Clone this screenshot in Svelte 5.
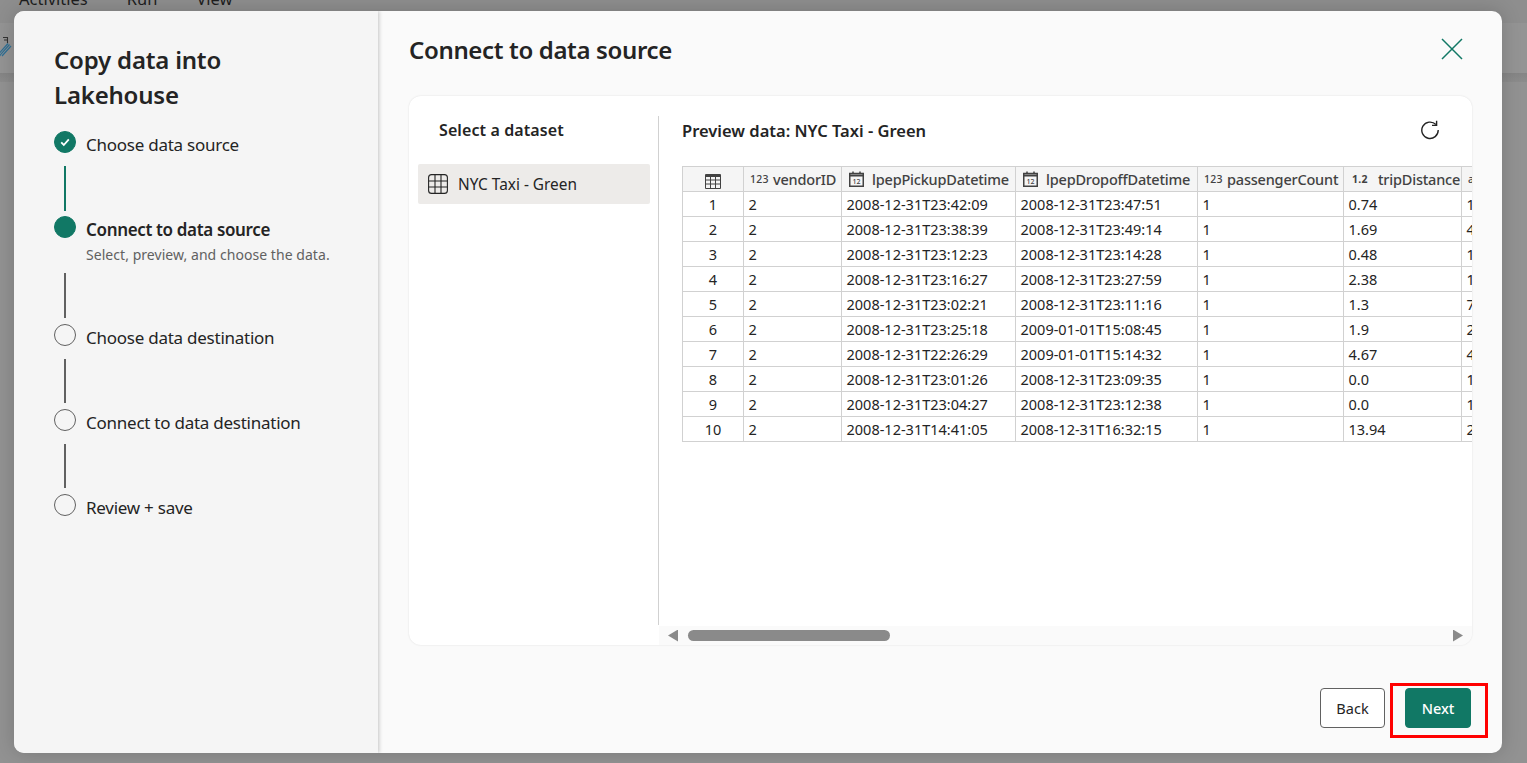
<script lang="ts">
	const steps = [
		{ label: 'Choose data source', state: 'done' },
		{ label: 'Connect to data source', state: 'current', note: 'Select, preview, and choose the data.' },
		{ label: 'Choose data destination', state: 'todo' },
		{ label: 'Connect to data destination', state: 'todo' },
		{ label: 'Review + save', state: 'todo' }
	];

	const columns = [
		{ name: 'vendorID', kind: '123' },
		{ name: 'lpepPickupDatetime', kind: 'date' },
		{ name: 'lpepDropoffDatetime', kind: 'date' },
		{ name: 'passengerCount', kind: '123' },
		{ name: 'tripDistance', kind: '1.2' },
		{ name: 'a', kind: 'abc' }
	];

	const rows = [
		['2', '2008-12-31T23:42:09', '2008-12-31T23:47:51', '1', '0.74', '1'],
		['2', '2008-12-31T23:38:39', '2008-12-31T23:49:14', '1', '1.69', '4'],
		['2', '2008-12-31T23:12:23', '2008-12-31T23:14:28', '1', '0.48', '1'],
		['2', '2008-12-31T23:16:27', '2008-12-31T23:27:59', '1', '2.38', '1'],
		['2', '2008-12-31T23:02:21', '2008-12-31T23:11:16', '1', '1.3', '7'],
		['2', '2008-12-31T23:25:18', '2009-01-01T15:08:45', '1', '1.9', '2'],
		['2', '2008-12-31T22:26:29', '2009-01-01T15:14:32', '1', '4.67', '4'],
		['2', '2008-12-31T23:01:26', '2008-12-31T23:09:35', '1', '0.0', '1'],
		['2', '2008-12-31T23:04:27', '2008-12-31T23:12:38', '1', '0.0', '1'],
		['2', '2008-12-31T14:41:05', '2008-12-31T16:32:15', '1', '13.94', '2']
	];
</script>

<div class="page">
	<div class="menu">
		<span>Activities</span>
		<span>Run</span>
		<span>View</span>
	</div>
	<div class="toolbar">
		<svg class="tool-icon" width="14" height="24" viewBox="0 0 14 24" fill="none">
			<path d="M3 2.5H8M7.5 2.5V8M4 5H7" stroke="#333" stroke-width="1.1" />
			<path d="M9.5 9.5 1 19 -1 22M8 8.5 -1 18.5M11 11 2 21" stroke="#2f6f94" stroke-width="1.2" />
		</svg>
	</div>
	<div class="toolbar-edge"></div>

	<div class="dialog">
		<aside class="wizard">
			<h1>Copy data into Lakehouse</h1>
			<ol class="steps">
				{#each steps as step, i}
					<li class="step {step.state}">
						<div class="marker">
							<span class="dot">
								{#if step.state === 'done'}
									<svg width="12" height="12" viewBox="0 0 12 12"><path d="M2.2 6.4 4.8 9 9.8 3.4" fill="none" stroke="#fff" stroke-width="1.8" /></svg>
								{/if}
							</span>
							{#if i < steps.length - 1}
								<span class="line"></span>
							{/if}
						</div>
						<div class="step-text">
							<div class="step-label">{step.label}</div>
							{#if step.note}
								<div class="step-note">{step.note}</div>
							{/if}
						</div>
					</li>
				{/each}
			</ol>
		</aside>

		<main class="content">
			<header class="content-head">
				<h2>Connect to data source</h2>
				<button class="close" aria-label="Close">
					<svg width="22" height="22" viewBox="0 0 22 22"><path d="M1 1 21 21M21 1 1 21" stroke="#117865" stroke-width="1.5" fill="none" /></svg>
				</button>
			</header>

			<section class="card">
				<div class="datasets">
					<h3>Select a dataset</h3>
					<div class="dataset">
						<svg width="20" height="20" viewBox="0 0 20 20" fill="none" stroke="#242424" stroke-width="1.1">
							<rect x="0.6" y="0.6" width="18.8" height="18.8" rx="3" />
							<path d="M0.6 7H19.4M0.6 13H19.4M7 0.6V19.4M13 0.6V19.4" />
						</svg>
						<span>NYC Taxi - Green</span>
					</div>
				</div>

				<div class="preview">
					<div class="preview-head">
						<h3>Preview data: NYC Taxi - Green</h3>
						<button class="refresh" aria-label="Refresh">
							<svg width="20" height="20" viewBox="0 0 20 20" fill="none" stroke="#242424" stroke-width="1.4">
								<path d="M15.9 4.6A8.2 8.2 0 1 0 18.2 10" />
								<path d="M16.6 0.8V5.4H12" />
							</svg>
						</button>
					</div>

					<div class="table-wrap">
						<table>
							<thead>
								<tr>
									<th class="num">
										<svg class="grid-icon" width="16" height="15" viewBox="0 0 16 15" fill="none" stroke="#424242">
											<path d="M0.5 0.5H15.5V14.5H0.5Z" />
											<path d="M0.5 1.5H15.5M0.5 2.5H15.5" />
											<path d="M0.5 6H15.5M0.5 10H15.5M5.5 2.5V14.5M10.5 2.5V14.5" />
										</svg>
									</th>
									{#each columns as col}
										<th>
											<span class="th-inner">
												{#if col.kind === 'date'}
													<svg class="cal" width="15" height="16" viewBox="0 0 15 16" fill="none" stroke="#424242">
														<rect x="0.75" y="2.5" width="13.5" height="12.75" stroke-width="1.5" />
														<path d="M0.75 4.5H14.25" stroke-width="2" />
														<path d="M4 0.5V3M11 0.5V3" stroke-width="1.5" />
														<text x="7.5" y="12.8" text-anchor="middle" class="cal-day">12</text>
													</svg>
												{:else}
													<span class="kind" class:decimal={col.kind === '1.2'}>{col.kind}</span>
												{/if}
												<span>{col.name}</span>
											</span>
										</th>
									{/each}
								</tr>
							</thead>
							<tbody>
								{#each rows as row, i}
									<tr>
										<td class="num">{i + 1}</td>
										{#each row as value}
											<td>{value}</td>
										{/each}
									</tr>
								{/each}
							</tbody>
						</table>
					</div>
				</div>

				<div class="scrollbar">
					<span class="arrow left"></span>
					<div class="track"><span class="thumb"></span></div>
					<span class="arrow right"></span>
				</div>
			</section>

			<footer class="actions">
				<button class="btn">Back</button>
				<button class="btn primary">Next</button>
				<span class="highlight"></span>
			</footer>
		</main>
	</div>
</div>

<style>
	:global(body) {
		margin: 0;
		font-family: 'Noto Sans', 'Open Sans', sans-serif;
		color: #242424;
	}

	h1, h2, h3 {
		margin: 0;
	}

	button {
		font: inherit;
		background: none;
		border: 0;
		padding: 0;
	}

	.page {
		position: relative;
		width: 1527px;
		height: 763px;
		overflow: hidden;
		background: #929292;
	}

	.menu {
		height: 23px;
		background: #8e8e8e;
		color: #1e1e1e;
		font-size: 16.5px;
		line-height: 1;
		display: flex;
		gap: 39px;
		padding-left: 19px;
		overflow: hidden;
	}

	.menu span {
		margin-top: -9px;
	}

	.toolbar {
		height: 50px;
		background: #949494;
		overflow: hidden;
	}

	.tool-icon {
		display: block;
		margin-top: 12px;
	}

	.toolbar-edge {
		height: 9px;
		background: linear-gradient(#858585, #8c8c8c);
	}

	.dialog {
		position: absolute;
		left: 14px;
		top: 11px;
		width: 1488px;
		height: 742px;
		border-radius: 10px;
		overflow: hidden;
		display: flex;
		background: #fafafa;
		box-shadow: 0 0 20px rgba(0, 0, 0, 0.18);
	}

	.wizard {
		width: 364px;
		flex: none;
		box-sizing: border-box;
		background: #f5f5f5;
		padding: 31px 40px 0;
		box-shadow: 1px 0 4px rgba(0, 0, 0, 0.22);
		position: relative;
		z-index: 1;
	}

	h1 {
		font-size: 24px;
		font-weight: 600;
		line-height: 35px;
		letter-spacing: -0.2px;
		width: 200px;
	}

	.steps {
		list-style: none;
		margin: 19px 0 0;
		padding: 0;
	}

	.step {
		display: flex;
		gap: 10px;
		min-height: 85px;
	}

	.step.current {
		min-height: 108px;
	}

	.marker {
		width: 22px;
		flex: none;
		display: flex;
		flex-direction: column;
		align-items: center;
	}

	.dot {
		width: 22px;
		height: 22px;
		box-sizing: border-box;
		border-radius: 50%;
		border: 1px solid #616161;
		display: flex;
		align-items: center;
		justify-content: center;
		flex: none;
	}

	.done .dot, .current .dot {
		background: #117865;
		border-color: #117865;
	}

	.line {
		width: 2px;
		flex: 1;
		background: #616161;
		margin: 13px 0 6px;
	}

	.done .line {
		background: #117865;
		margin-bottom: 5px;
	}

	.current .line {
		margin-top: 35px;
	}

	.step-label {
		font-size: 17px;
		line-height: 24px;
		letter-spacing: -0.25px;
		margin-top: 2px;
		white-space: nowrap;
	}

	.current .step-label {
		font-weight: 600;
		letter-spacing: -0.35px;
	}

	.step-note {
		font-size: 14px;
		line-height: 18px;
		color: #616161;
		letter-spacing: 0.05px;
		margin-top: 4px;
		white-space: nowrap;
	}

	.content {
		flex: 1;
		min-width: 0;
		padding: 0 30px 0 31px;
		display: flex;
		flex-direction: column;
	}

	.content-head {
		height: 85px;
		flex: none;
		display: flex;
		align-items: flex-start;
		justify-content: space-between;
		padding-top: 22px;
		box-sizing: border-box;
	}

	h2 {
		font-size: 24px;
		font-weight: 600;
		line-height: 34px;
		letter-spacing: -0.35px;
	}

	.close {
		margin: 5px 9px 0 0;
		height: 22px;
	}

	.close svg, .refresh svg {
		display: block;
	}

	.card {
		height: 549px;
		flex: none;
		background: #fff;
		border-radius: 12px;
		box-shadow: 0 0 2px rgba(0, 0, 0, 0.12);
		display: grid;
		grid-template-columns: 250px 1fr;
		grid-template-rows: 1fr 19px;
		overflow: hidden;
		padding-top: 20px;
		box-sizing: border-box;
	}

	.datasets {
		border-right: 1px solid #d1d1d1;
		padding: 0 9px;
		box-sizing: border-box;
		height: 509px;
	}

	h3 {
		font-size: 16px;
		font-weight: 600;
		line-height: 28px;
		letter-spacing: 0.1px;
	}

	.datasets h3 {
		margin-left: 21px;
		height: 48px;
	}

	.dataset {
		height: 40px;
		background: #edebe9;
		border-radius: 2px;
		display: flex;
		align-items: center;
		gap: 10px;
		padding-left: 10px;
		font-size: 15.4px;
		color: #242424;
		width: 232px;
		box-sizing: border-box;
	}

	.preview {
		min-width: 0;
		padding-left: 23px;
	}

	.preview-head {
		display: flex;
		justify-content: space-between;
		align-items: flex-start;
		height: 50px;
		padding-right: 32px;
	}

	.preview-head h3 {
		font-size: 16.5px;
		margin-top: 1px;
		letter-spacing: 0;
	}

	.refresh {
		height: 20px;
		margin-top: 4px;
	}

	.table-wrap {
		overflow: hidden;
	}

	table {
		border-collapse: collapse;
		table-layout: fixed;
		width: 790px;
		font-size: 14.5px;
		box-sizing: border-box;
	}

	th, td {
		border: 1px solid #d1d1d1;
		height: 24px;
		padding: 0 0 0 3px;
		box-sizing: border-box;
		text-align: left;
		white-space: nowrap;
		overflow: hidden;
		line-height: 24px;
	}

	td {
		padding: 1px 0 0 4.5px;
		line-height: 23px;
	}

	th {
		background: #f5f5f5;
		font-weight: 500;
		color: #424242;
		letter-spacing: -0.2px;
	}

	th:nth-child(1) { width: 61px; }
	th:nth-child(2) { width: 98px; }
	th:nth-child(3) { width: 174px; }
	th:nth-child(4) { width: 182px; }
	th:nth-child(5) { width: 146px; }
	th:nth-child(6) { width: 118px; }
	th:nth-child(7) { width: 11px; border-right: 0; }
	td:last-child { border-right: 0; }

	.num {
		text-align: center;
		padding-left: 0;
	}

	.grid-icon {
		vertical-align: middle;
	}

	.th-inner {
		display: flex;
		align-items: center;
		gap: 5px;
		padding-left: 3px;
	}

	th:nth-child(n + 3):nth-child(-n + 4) .th-inner {
		gap: 8px;
		padding-left: 4px;
	}

	th:nth-child(6) .th-inner {
		gap: 8px;
	}

	.kind {
		font-size: 10.5px;
		font-weight: 500;
		color: #424242;
		letter-spacing: 0.3px;
		width: 18px;
		text-align: center;
	}

	.kind.decimal {
		font-weight: 700;
		width: 20px;
	}

	.cal {
		flex: none;
	}

	.cal-day {
		font-size: 7px;
		fill: #424242;
		stroke: none;
		letter-spacing: 0;
	}

	.scrollbar {
		grid-column: 1 / -1;
		margin-left: 250px;
		background: #fafafa;
		display: flex;
		align-items: center;
		padding: 0 9px;
		gap: 10px;
		box-sizing: border-box;
	}

	.track {
		flex: 1;
		height: 11px;
	}

	.thumb {
		display: block;
		width: 202px;
		height: 11px;
		border-radius: 6px;
		background: #8a8a8a;
	}

	.arrow {
		width: 10px;
		height: 12px;
		background: #8a8a8a;
		flex: none;
	}

	.arrow.left {
		clip-path: polygon(0 50%, 100% 0, 100% 100%);
	}

	.arrow.right {
		clip-path: polygon(0 0, 100% 50%, 0 100%);
	}

	.actions {
		position: relative;
		display: flex;
		justify-content: flex-end;
		gap: 20px;
		padding: 43px 1px 0 0;
	}

	.btn {
		height: 40px;
		width: 65px;
		box-sizing: border-box;
		border: 1px solid #616161;
		border-radius: 4px;
		background: #fff;
		font-size: 14.5px;
		color: #242424;
	}

	.btn.primary {
		width: 66px;
		background: #117865;
		border-color: #117865;
		color: #fff;
		font-weight: 500;
	}

	.highlight {
		position: absolute;
		right: -16px;
		top: 38px;
		width: 98px;
		height: 55px;
		box-sizing: border-box;
		border: 3px solid #f00;
	}
</style>
